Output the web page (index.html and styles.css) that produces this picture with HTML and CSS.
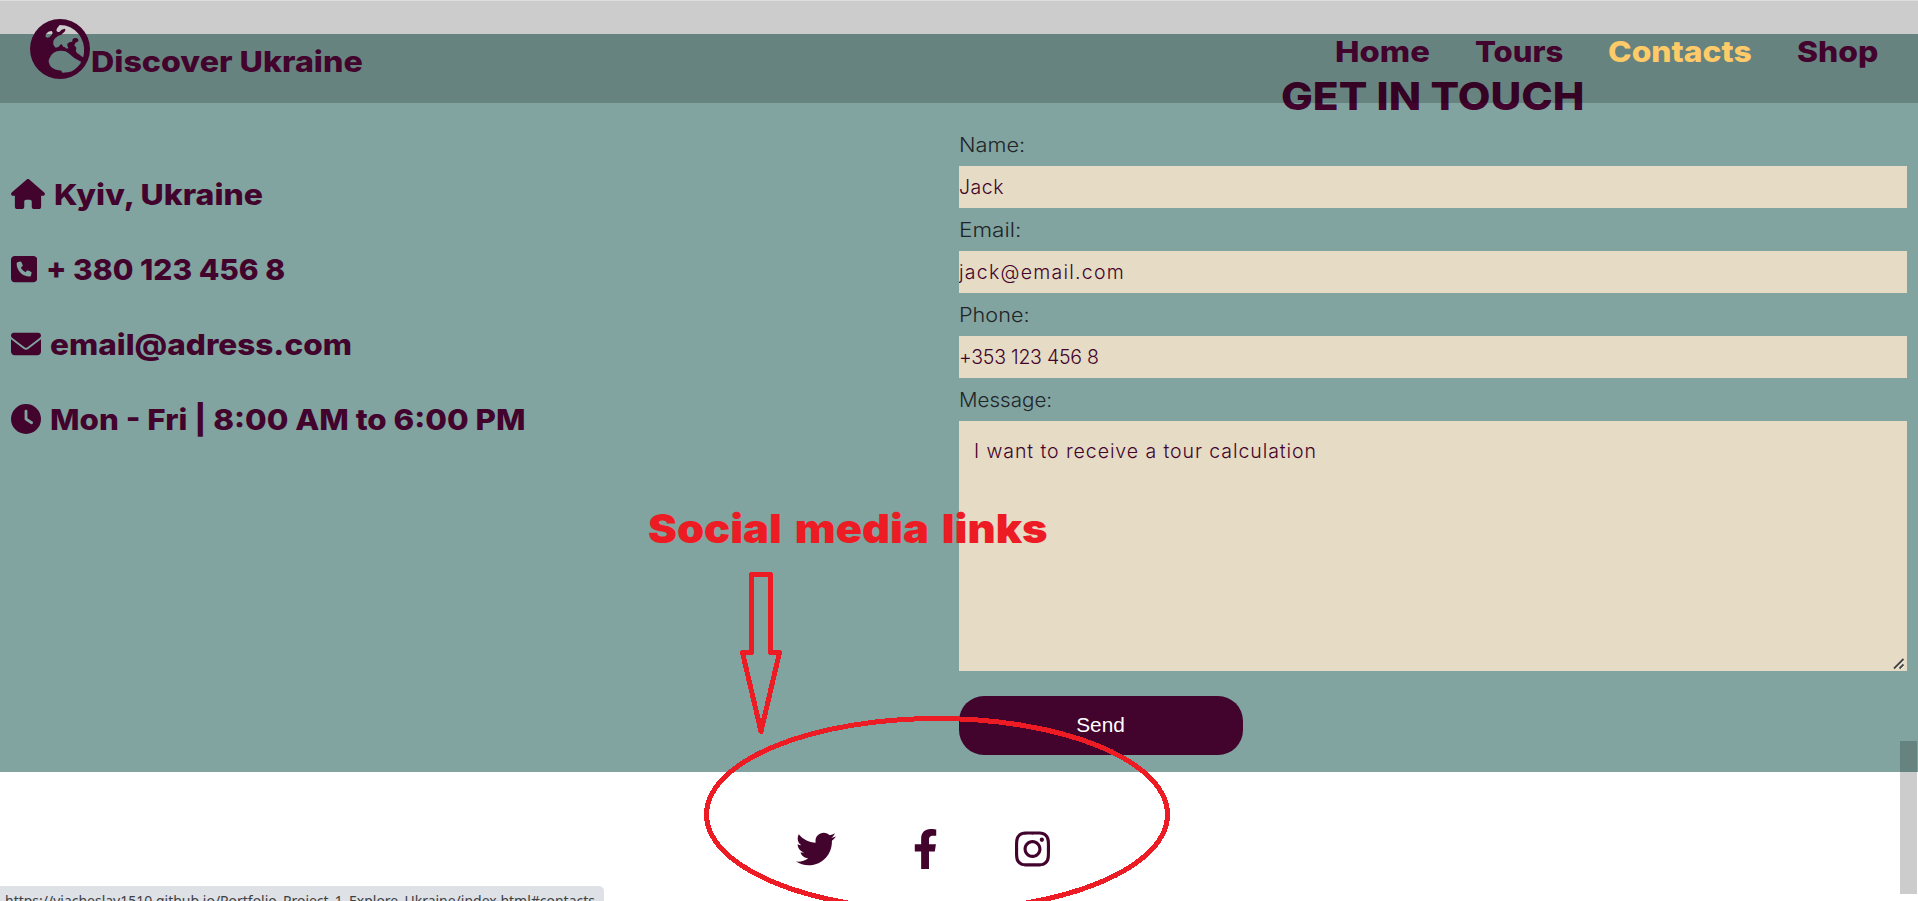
FILE: index.html
```html
<!DOCTYPE html>
<html lang="en">
<head>
<meta charset="utf-8">
<title>Discover Ukraine</title>
<link rel="stylesheet" href="styles.css">
</head>
<body>
<header class="header">
  <a class="brand">
    <svg class="globe" viewBox="91 58 180 180"><path fill-rule="evenodd" d="M181 58a90 90 0 1 1 0 180a90 90 0 1 1 0-180zM180 76Q215 76 237 103Q256 128 253 160L251 172Q247 173 241 166L232 160Q226 152 230 148Q231 140 224 138Q226 128 236 125Q238 116 228 115Q216 116 218 126Q208 126 203 132Q202 140 206 145Q206 148 202 146Q199 148 196 142Q192 144 189 138Q184 130 181 137Q178 144 168 144Q157 136 162 122Q166 114 176 108Q184 108 193 98Q200 90 195 87Q184 88 180 96Q172 99 170 92Q172 84 180 76zM139 103Q146 93 156 94Q161 98 157 105Q152 108 149 113Q140 116 137 110zM150 175Q158 154 182 153Q198 152 206 160Q222 176 240 184Q246 185 242 192Q225 214 205 218L188 219Q186 210 176 212Q156 208 150 195Q144 184 150 175z"/></svg>
    <span class="brand-name wide">Discover Ukraine</span>
  </a>
  <nav class="nav">
    <a class="nav-home"><span class="wide">Home</span></a>
    <a class="nav-tours"><span class="wide">Tours</span></a>
    <a class="nav-contacts"><span class="wide">Contacts</span></a>
    <a class="nav-shop"><span class="wide">Shop</span></a>
  </nav>
</header>

<main class="contacts">
  <ul class="details">
    <li class="d-home"><svg width="34" height="30" viewBox="0 0 576 512"><path d="M575.8 255.5c0 18-15 32.1-32 32.1h-32l.7 160.2c0 2.7-.2 5.4-.5 8.1V472c0 22.1-17.9 40-40 40H392c-22.1 0-40-17.9-40-40V384c0-17.7-14.3-32-32-32H256c-17.7 0-32 14.3-32 32v88c0 22.1-17.9 40-40 40H104c-22.1 0-40-17.9-40-40V287.6H32c-18 0-32-14-32-32.1c0-9 3-17 10-24L266.4 8c7-7 15-8 22-8s15 2 21 7L564.8 231.5c8 7 12 15 11 24z"/></svg><span class="wide">Kyiv, Ukraine</span></li>
    <li class="d-phone"><svg width="26.25" height="30" viewBox="0 0 448 512"><path d="M64 32C28.7 32 0 60.7 0 96V416c0 35.3 28.7 64 64 64H384c35.3 0 64-28.7 64-64V96c0-35.3-28.7-64-64-64H64zm90.7 96.7c9.7-2.6 19.9 2.3 23.7 11.6l20 48c3.4 8.2 1 17.6-5.8 23.2L168 231.7c16.6 35.2 45.1 63.7 80.3 80.3l20.2-24.7c5.6-6.8 15-9.2 23.2-5.8l48 20c9.3 3.9 14.2 14 11.6 23.7l-12 44C336.9 378 329 384 320 384C196.3 384 96 283.7 96 160c0-9 6-16.9 14.7-19.3l44-12z"/></svg><span class="wide">+ 380 123 456 8</span></li>
    <li class="d-email"><svg width="30" height="30" viewBox="0 0 512 512"><path d="M48 64C21.5 64 0 85.5 0 112c0 15.1 7.1 29.3 19.2 38.4L236.8 313.6c11.4 8.5 27 8.5 38.4 0L492.8 150.4c12.1-9.1 19.2-23.3 19.2-38.4c0-26.5-21.5-48-48-48H48zM0 176V384c0 35.3 28.7 64 64 64H448c35.3 0 64-28.7 64-64V176L294.4 339.2c-22.8 17.1-54 17.1-76.8 0L0 176z"/></svg><span class="wide">email@adress.com</span></li>
    <li class="d-hours"><svg width="30" height="30" viewBox="0 0 512 512"><path fill-rule="evenodd" d="M256 0a256 256 0 1 1 0 512A256 256 0 1 1 256 0zM232 120V256c0 8 4 15.5 10.7 20l96 64c11 7.4 25.9 4.4 33.3-6.7s4.4-25.9-6.7-33.3L280 243.2V120c0-13.3-10.7-24-24-24s-24 10.7-24 24z"/></svg><span class="wide">Mon - Fri | 8:00 AM to 6:00 PM</span></li>
  </ul>
  <form class="form">
    <h2 class="form-title"><span class="wide">GET IN TOUCH</span></h2>
    <label class="l-name" for="name"><span class="wide">Name:</span></label>
    <input class="field f-name" id="name" value="Jack">
    <label class="l-email" for="email"><span class="wide">Email:</span></label>
    <input class="field f-email" id="email" value="jack@email.com">
    <label class="l-phone" for="phone"><span class="wide">Phone:</span></label>
    <input class="field f-phone" id="phone" value="+353 123 456 8">
    <label class="l-message" for="message"><span class="wide">Message:</span></label>
    <div class="message-box">
      <textarea class="field message" id="message">I want to receive a tour calculation</textarea>
      <svg class="grip" width="12" height="12" viewBox="0 0 12 12"><path class="grip-light" d="M2.5 11L11 2.5M8 11L11 8"/><path class="grip-dark" d="M1 10.5L10.5 1M6.5 10.5L10.5 6.5"/></svg>
    </div>
    <button class="send" type="button">Send</button>
  </form>
</main>

<footer class="social">
  <a><svg width="40" height="40" viewBox="0 0 512 512"><path d="M459.37 151.716c.325 4.548.325 9.097.325 13.645 0 138.72-105.583 298.558-298.558 298.558-59.452 0-114.68-17.219-161.137-47.106 8.447.974 16.568 1.299 25.34 1.299 49.055 0 94.213-16.568 130.274-44.832-46.132-.975-84.792-31.188-98.112-72.772 6.498.974 12.995 1.624 19.818 1.624 9.421 0 18.843-1.3 27.614-3.573-48.081-9.747-84.143-51.98-84.143-102.985v-1.299c13.969 7.797 30.214 12.67 47.431 13.319-28.264-18.843-46.781-51.005-46.781-87.391 0-19.492 5.197-37.36 14.294-52.954 51.655 63.675 129.3 105.258 216.365 109.807-1.624-7.797-2.599-15.918-2.599-24.04 0-57.828 46.782-104.934 104.934-104.934 30.213 0 57.502 12.67 76.67 33.137 23.715-4.548 46.456-13.32 66.599-25.34-7.798 24.366-24.366 44.833-46.132 57.827 21.117-2.273 41.584-8.122 60.426-16.243-14.292 20.791-32.161 39.308-52.628 54.253z"/></svg></a>
  <a><svg width="25" height="40" viewBox="0 0 320 512"><path d="M279.14 288l14.22-92.66h-88.91v-60.13c0-25.35 12.42-50.06 52.24-50.06h40.42V6.26S260.43 0 225.36 0c-73.22 0-121.08 44.38-121.08 124.72v70.62H22.89V288h81.39v224h100.17V288z"/></svg></a>
  <a><svg width="35" height="40" viewBox="0 0 448 512"><path d="M224.1 141c-63.6 0-114.9 51.3-114.9 114.9s51.3 114.9 114.9 114.9S339 319.5 339 255.9 287.7 141 224.1 141zm0 189.6c-41.1 0-74.7-33.5-74.7-74.7s33.5-74.7 74.7-74.7 74.7 33.5 74.7 74.7-33.6 74.7-74.7 74.7zm146.4-194.3c0 14.9-12 26.8-26.8 26.8-14.9 0-26.8-12-26.8-26.8s12-26.8 26.8-26.8 26.8 12 26.8 26.8zm76.1 27.2c-1.7-35.9-9.9-67.7-36.2-93.9-26.2-26.2-58-34.4-93.9-36.2-37-2.1-147.9-2.1-184.9 0-35.8 1.7-67.6 9.9-93.9 36.1s-34.4 58-36.2 93.9c-2.1 37-2.1 147.9 0 184.9 1.7 35.9 9.9 67.7 36.2 93.9s58 34.4 93.9 36.2c37 2.1 147.9 2.1 184.9 0 35.9-1.7 67.7-9.9 93.9-36.2 26.2-26.2 34.4-58 36.2-93.9 2.1-37 2.1-147.8 0-184.8zM398.8 388c-7.8 19.6-22.9 34.7-42.6 42.6-29.5 11.7-99.5 9-132.1 9s-102.7 2.6-132.1-9c-19.6-7.8-34.7-22.9-42.6-42.6-11.7-29.5-9-99.5-9-132.1s-2.6-102.7 9-132.1c7.8-19.6 22.9-34.7 42.6-42.6 29.5-11.7 99.5-9 132.1-9s102.7-2.6 132.1 9c19.6 7.8 34.7 22.9 42.6 42.6 11.7 29.5 9 99.5 9 132.1s2.7 102.7-9 132.1z"/></svg></a>
</footer>

<div class="scroll-thumb"></div>
<div class="status"><span class="wide">https://viacheslav1510.github.io/Portfolio_Project_1_Explore_Ukraine/index.html#contacts</span></div>

<svg class="marks" width="1918" height="901" viewBox="0 0 1918 901" shape-rendering="crispEdges">
  <path d="M751.5 574.5H770.5V652.5H779.5L761 731.5L742.5 652.5H751.5Z"/>
  <ellipse cx="937" cy="814.5" rx="230.5" ry="96"/>
</svg>
<div class="note wide">Social media links</div>
</body>
</html>
```

FILE: styles.css
```css
* { box-sizing: border-box; }
body {
  margin: 0;
  padding-top: 34px;
  height: 901px;
  overflow: hidden;
  position: relative;
  background: #fff;
  color: #42032c;
  font-family: Inter, "Liberation Sans", sans-serif;
}
svg { display: block; fill: currentColor; flex: none; }

/* Horizontal stretch, set per item through --sx */
.wide {
  display: inline-block;
  white-space: nowrap;
  transform: scaleX(var(--sx, 1));
  transform-origin: 0 50%;
}

.header {
  position: absolute;
  z-index: 2;
  top: 0;
  left: 0;
  width: 100%;
  height: 103px;
  padding: 0 38.5px 0 30px;
  display: flex;
  justify-content: space-between;
  align-items: flex-start;
  background: linear-gradient(rgba(0, 0, 0, .13) 1px, rgba(0, 0, 0, .2) 1px);
  font-size: 29px;
  font-weight: 800;
  line-height: 36px;
}
.brand { display: flex; align-items: flex-start; padding-top: 19px; }
.globe { width: 60px; height: 60px; }
.brand-name { --sx: 1.11; margin-top: 25px; margin-left: .5px; }
.nav { display: flex; gap: 44px; padding-top: 34px; }
.nav-home { --sx: 1.13; width: 96.5px; }
.nav-tours { --sx: 1.07; width: 88.5px; }
.nav-contacts { --sx: 1.097; width: 145px; color: #ffcb69; }
.nav-shop { --sx: 1.1; width: 83px; }

.contacts {
  display: grid;
  grid-template-columns: 948px 948px;
  height: 738px;
  padding-left: 11px;
  background: #81a4a0;
}
.details {
  list-style: none;
  margin: 0;
  padding: 122.5px 0 0;
  font-size: 29px;
  font-weight: 800;
}
.details li { display: flex; align-items: center; gap: 8.8px; height: 75px; }
.d-home { --sx: 1.103; }
.d-phone { --sx: 1.034; }
.d-email { --sx: 1.087; }
.d-hours { --sx: 1.08; }

.form {
  display: flex;
  flex-direction: column;
  align-items: stretch;
  padding-top: 38px;
  font-size: 19.5px;
  font-weight: 300;
}
.form-title {
  --sx: 1.1;
  margin: 0 0 3px;
  padding-left: 321.5px;
  font-size: 38.5px;
  font-weight: 800;
  line-height: 48px;
  height: 48px;
}
.form label { height: 43px; line-height: 44px; color: #212529; }
.l-name { --sx: 1.115; }
.l-email { --sx: 1.155; }
.l-phone { --sx: 1.11; }
.l-message { --sx: 1.055; }
.field {
  height: 42px;
  margin: 0;
  padding: 0;
  border: 0;
  border-radius: 0;
  outline: 0;
  background: #e6dbc4;
  color: #42032c;
  font: 300 19.5px/24px Inter, "Liberation Sans", sans-serif;
}
.f-name { letter-spacing: .5px; }
.f-email { letter-spacing: 1.25px; }
.f-phone { letter-spacing: -.25px; }
.message-box { position: relative; height: 250px; }
.message { display: block; width: 100%; height: 250px; padding: 18px 15px; letter-spacing: .93px; resize: none; }
.grip { position: absolute; right: 2px; bottom: 1px; fill: none; }
.grip-dark { stroke: #444; stroke-width: 1.8; }
.grip-light { stroke: #fff; stroke-width: 1; }
.send {
  width: 284px;
  height: 59px;
  margin-top: 25px;
  padding: 0 1px 2px 0;
  border: 0;
  border-radius: 25px;
  background: #42032c;
  color: #fff;
  font: 20.8px "Liberation Sans", sans-serif;
}

.social { display: flex; padding: 57px 0 0 796px; }
.social a:nth-child(2) { margin: 0 77px; }

.scroll-thumb {
  position: absolute;
  left: 1900px;
  top: 741px;
  width: 17px;
  height: 153px;
  background: rgba(0, 0, 0, .2);
}
.status {
  --sx: .932;
  position: absolute;
  left: 0;
  top: 886px;
  width: 604px;
  height: 30px;
  padding-left: 4.5px;
  border-top-right-radius: 5px;
  background: #dee1e6;
  color: #3c4043;
  font: 15px/29px "Noto Sans", sans-serif;
}
.marks { position: absolute; z-index: 3; left: 0; top: 0; fill: none; stroke: #ed1c24; stroke-width: 5; stroke-linejoin: round; }
.note {
  --sx: 1.085;
  position: absolute;
  z-index: 3;
  left: 648px;
  top: 505px;
  color: #ed1c24;
  font-size: 40px;
  font-weight: 900;
  line-height: 48px;
  word-spacing: 4px;
}
```
